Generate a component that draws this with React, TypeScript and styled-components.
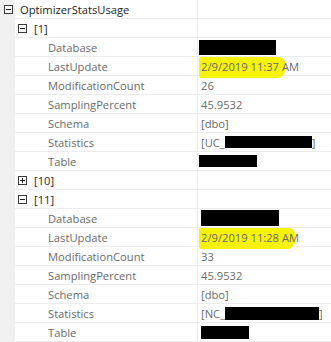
import styled, { createGlobalStyle } from 'styled-components';

const GlobalStyle = createGlobalStyle`
  html, body {
    margin: 0;
    padding: 0;
    background: #ffffff;
  }
  body {
    font-family: 'Open Sans', 'Noto Sans', sans-serif;
    font-size: 11.2px;
  }
`;

const Grid = styled.div`
  width: 331px;
  height: 342px;
  overflow: hidden;
  background: #ffffff;
`;

const Row = styled.div`
  display: flex;
  height: 19px;
`;

const Gutter = styled.div`
  width: 15px;
  flex: none;
  background: #f0f0f0;
`;

const NameCell = styled.div<{ $pad: number; $strong?: boolean }>`
  width: 182px;
  flex: none;
  box-sizing: border-box;
  display: flex;
  align-items: center;
  padding-left: ${(p) => p.$pad}px;
  border-bottom: 1px solid #ececec;
  color: ${(p) => (p.$strong ? '#1e1e1e' : '#6b6b6b')};
  white-space: nowrap;
`;

const ValueCell = styled.div`
  flex: 1;
  box-sizing: border-box;
  display: flex;
  align-items: center;
  padding-left: 3px;
  border-left: 1px solid #ececec;
  border-bottom: 1px solid #ececec;
  color: #6b6b6b;
  white-space: nowrap;
`;

const Expander = styled.span<{ $offset: number }>`
  position: relative;
  width: 9px;
  height: 9px;
  flex: none;
  box-sizing: border-box;
  border: 1px solid #3a3a3a;
  background: #ffffff;
  margin-left: ${(p) => p.$offset}px;
  margin-right: 7px;

  &::before {
    content: '';
    position: absolute;
    left: 1px;
    right: 1px;
    top: 3px;
    height: 1px;
    background: #222;
  }
`;

const PlusBar = styled.span`
  position: absolute;
  top: 1px;
  bottom: 1px;
  left: 3px;
  width: 1px;
  background: #222;
`;

const Redact = styled.span<{ $w: number; $h: number; $ml?: number }>`
  display: inline-block;
  width: ${(p) => p.$w}px;
  height: ${(p) => p.$h}px;
  background: #000000;
  margin-left: ${(p) => p.$ml ?? 0}px;
  vertical-align: middle;
`;

const Marked = styled.span<{ $cut: number }>`
  position: relative;
  z-index: 0;

  &::before {
    content: '';
    position: absolute;
    z-index: -1;
    left: -2px;
    right: ${(p) => p.$cut}px;
    top: -2px;
    bottom: -4px;
    background: #f7f20a;
    border-radius: 2px 6px 8px 3px;
  }
`;

type Prop = { name: string; value: React.ReactNode };

const Node = ({ level, label, open }: { level: number; label: string; open: boolean }) => (
  <Row>
    <Gutter />
    <NameCell $pad={0} $strong>
      <Expander $offset={level * 14 - 11}>{!open && <PlusBar />}</Expander>
      {label}
    </NameCell>
    <ValueCell />
  </Row>
);

const PropRow = ({ name, value }: Prop) => (
  <Row>
    <Gutter />
    <NameCell $pad={33}>{name}</NameCell>
    <ValueCell>{value}</ValueCell>
  </Row>
);

const first: Prop[] = [
  { name: 'Database', value: <Redact $w={77} $h={15} $ml={-2} /> },
  { name: 'LastUpdate', value: <Marked $cut={14}>2/9/2019 11:37 AM</Marked> },
  { name: 'ModificationCount', value: '26' },
  { name: 'SamplingPercent', value: '45.9532' },
  { name: 'Schema', value: '[dbo]' },
  {
    name: 'Statistics',
    value: (
      <>
        [UC_<Redact $w={87} $h={12} />]
      </>
    ),
  },
  { name: 'Table', value: <Redact $w={58} $h={12} $ml={-2} /> },
];

const eleventh: Prop[] = [
  { name: 'Database', value: <Redact $w={78} $h={16} /> },
  { name: 'LastUpdate', value: <Marked $cut={4}>2/9/2019 11:28 AM</Marked> },
  { name: 'ModificationCount', value: '33' },
  { name: 'SamplingPercent', value: '45.9532' },
  { name: 'Schema', value: '[dbo]' },
  {
    name: 'Statistics',
    value: (
      <>
        [NC_<Redact $w={94} $h={13} />]
      </>
    ),
  },
  { name: 'Table', value: <Redact $w={48} $h={13} /> },
];

export default function App() {
  return (
    <>
      <GlobalStyle />
      <Grid>
        <Node level={0} label="OptimizerStatsUsage" open />
        <Node level={1} label="[1]" open />
        {first.map((p) => (
          <PropRow key={'a' + p.name} {...p} />
        ))}
        <Node level={1} label="[10]" open={false} />
        <Node level={1} label="[11]" open />
        {eleventh.map((p) => (
          <PropRow key={'b' + p.name} {...p} />
        ))}
      </Grid>
    </>
  );
}
